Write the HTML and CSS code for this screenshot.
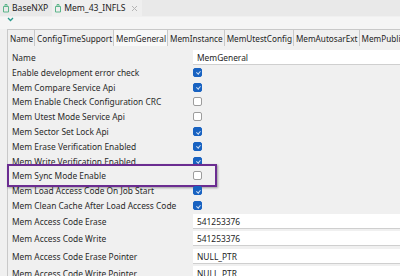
FILE: index.html
```html
<!DOCTYPE html>
<html lang="en">
<head>
<meta charset="UTF-8" />
<title>Mem_43_INFLS</title>
<link rel="stylesheet" href="styles.css">
</head>
<body>

  <!-- editor tabs -->
  <div class="editor-tabs">
    <div class="editor-tab">
      <svg class="file-icon" width="8" height="10" viewBox="0 0 8 10"><path d="M1.5 3.5h5v5.5h-5z M3 3.5V1.5h2v2" fill="none" stroke="#5cb58a" stroke-width="1"/></svg>
      <span>BaseNXP</span>
    </div>
    <div class="editor-tab active">
      <svg class="file-icon" width="8" height="10" viewBox="0 0 8 10"><path d="M1.5 3.5h5v5.5h-5z M3 3.5V1.5h2v2" fill="none" stroke="#5cb58a" stroke-width="1"/></svg>
      <span>Mem_43_INFLS</span>
      <svg class="close-icon" width="7" height="7" viewBox="0 0 7 7"><path d="M1 1l5 5M6 1l-5 5" stroke="#b5b5b5" stroke-width="1"/></svg>
    </div>
  </div>

  <div class="toolbar">
    <svg width="7" height="5" viewBox="0 0 7 5"><path d="M1 1l2.5 2.5L6 1" fill="none" stroke="#2b9a8c" stroke-width="1.3"/></svg>
  </div>

  <!-- container tabs -->
  <div class="page-tabs">
    <div class="page-tab">Name</div>
    <div class="page-tab">ConfigTimeSupport</div>
    <div class="page-tab selected">MemGeneral</div>
    <div class="page-tab">MemInstance</div>
    <div class="page-tab">MemUtestConfig</div>
    <div class="page-tab">MemAutosarExt</div>
    <div class="page-tab">MemPublishedInformation</div>
  </div>

  <div class="form">
    <div class="row">
      <div class="label">Name</div>
      <div class="field">MemGeneral</div>
    </div>
    <div class="row check-row">
      <div class="label">Enable development error check</div>
      <div class="box checked"></div>
    </div>
    <div class="row check-row">
      <div class="label">Mem Compare Service Api</div>
      <div class="box checked"></div>
    </div>
    <div class="row check-row">
      <div class="label">Mem Enable Check Configuration CRC</div>
      <div class="box"></div>
    </div>
    <div class="row check-row">
      <div class="label">Mem Utest Mode Service Api</div>
      <div class="box"></div>
    </div>
    <div class="row check-row">
      <div class="label">Mem Sector Set Lock Api</div>
      <div class="box checked"></div>
    </div>
    <div class="row check-row">
      <div class="label">Mem Erase Verification Enabled</div>
      <div class="box checked"></div>
    </div>
    <div class="row check-row">
      <div class="label">Mem Write Verification Enabled</div>
      <div class="box checked"></div>
    </div>
    <div class="row check-row highlighted">
      <div class="label">Mem Sync Mode Enable</div>
      <div class="box"></div>
      <div class="highlight"></div>
    </div>
    <div class="row check-row">
      <div class="label">Mem Load Access Code On Job Start</div>
      <div class="box checked"></div>
    </div>
    <div class="row check-row">
      <div class="label">Mem Clean Cache After Load Access Code</div>
      <div class="box checked"></div>
    </div>
    <div class="row text-row">
      <div class="label">Mem Access Code Erase</div>
      <div class="field">541253376</div>
    </div>
    <div class="row text-row">
      <div class="label">Mem Access Code Write</div>
      <div class="field">541253376</div>
    </div>
    <div class="row text-row">
      <div class="label">Mem Access Code Erase Pointer</div>
      <div class="field">NULL_PTR</div>
    </div>
    <div class="row text-row">
      <div class="label">Mem Access Code Write Pointer</div>
      <div class="field">NULL_PTR</div>
    </div>
  </div>

</body>
</html>
```

FILE: styles.css
```css
body {
  margin: 0;
  width: 400px;
  height: 276px;
  overflow: hidden;
  background-color: #f0f0f0;
  font-family: "Noto Sans", "Open Sans", sans-serif;
  font-size: 8.4px;
  color: #222;
}

.editor-tabs {
  display: flex;
  height: 16px;
  background-color: #e9e9e9;
  font-size: 8.6px;
}

.editor-tab {
  display: flex;
  align-items: center;
  gap: 2px;
  padding: 0 4px 0 2px;
  white-space: nowrap;
}

.editor-tab.active {
  background-color: #efefef;
}

.file-icon {
  margin-top: -1px;
}

.close-icon {
  margin-left: 4px;
}

.toolbar {
  height: 12px;
  background-color: #f5f5f5;
  padding-left: 7px;
}

.toolbar svg {
  display: block;
  margin-top: 1px;
}

.page-tabs {
  display: flex;
  height: 16px;
  margin-left: 7px;
  border-top: 1px solid #c9c9c9;
  border-left: 1px solid #c9c9c9;
  background-color: #f0f0f0;
  overflow: hidden;
  font-size: 8.2px;
}

.page-tab {
  display: flex;
  align-items: center;
  padding: 0 1px 0 2px;
  border-right: 1px solid #c9c9c9;
  white-space: nowrap;
  color: #1e1e1e;
}

.page-tab.selected {
  background-color: #f8f8f8;
}

.form {
  margin-left: 7px;
  border-left: 1px solid #c9c9c9;
  padding: 3px 0 0 4px;
  height: 240px;
}

.row {
  display: grid;
  grid-template-columns: 181px 1fr;
  align-items: center;
  white-space: nowrap;
}

.row:first-child {
  height: 16px;
}

.check-row {
  height: 14.8px;
}

.text-row {
  height: 17.3px;
}

.label {
  color: #2a2a2a;
}

.field {
  height: 15px;
  line-height: 15px;
  background-color: #fff;
  border-bottom: 1px solid #cfcfcf;
  box-sizing: border-box;
  padding-left: 4px;
  color: #1e1e1e;
}

.box {
  width: 9px;
  height: 9px;
  box-sizing: border-box;
  border: 1px solid #9c9c9c;
  border-radius: 2px;
  background-color: #fff;
}

.box.checked {
  border-color: #1862c1;
  background-color: #1862c1;
  position: relative;
}

.box.checked::after {
  content: "";
  position: absolute;
  left: 2.5px;
  top: 1.5px;
  width: 1.5px;
  height: 3px;
  border-right: 1px solid #cfe0f5;
  border-bottom: 1px solid #cfe0f5;
  transform: rotate(40deg);
}

.highlighted {
  position: relative;
}

.highlight {
  position: absolute;
  left: -5px;
  top: -4.5px;
  width: 210px;
  height: 23px;
  box-sizing: border-box;
  border: 2px solid #6b2d91;
  box-shadow: 1px 1px 2px rgba(0, 0, 0, 0.35);
}
```
